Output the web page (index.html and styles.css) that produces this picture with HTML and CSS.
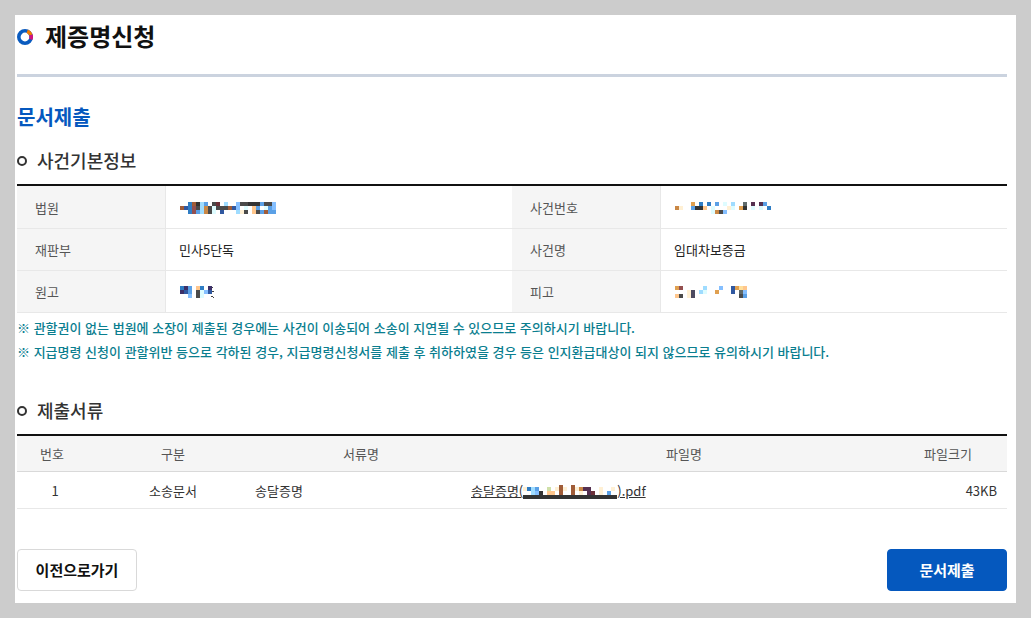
FILE: index.html
```html
<!DOCTYPE html>
<html lang="ko">
  <head>
    <meta charset="utf-8" />
    <title>제증명신청</title>
    <link rel="stylesheet" href="styles.css">
  </head>
  <body>
    <div class="container">
      <h1 class="page_title">
        <svg class="logo" width="16" height="16" viewBox="0 0 16 16">
          <circle cx="8" cy="8" r="6.2" fill="none" stroke="#0a5bbf" stroke-width="3.6" />
          <path d="M10.2 2.2A6.2 6.2 0 0 1 13.9 6" fill="none" stroke="#f57c00" stroke-width="3.6" />
          <path d="M13.9 6A6.2 6.2 0 0 1 13.7 10.4" fill="none" stroke="#d1127f" stroke-width="3.6" />
        </svg>
        제증명신청
      </h1>

      <h2>문서제출</h2>

      <h3>사건기본정보</h3>
      <table class="info">
        <tr>
          <th scope="row">법원</th>
          <td><svg class="mosaic" width="96" height="12" data-rows="..bwksB.dm.s..hddkkkBddh wvbrdsodldddwvh.l.pB.lBh ..brBsodl.v...scd.pdBwBB"></svg></td>
          <th scope="row">사건번호</th>
          <td><svg class="mosaic" width="96" height="12" data-rows="....y.b.b.B.l.s..g.M.MB. oc..Bkkp.l...cl.yk.l.l.b .........lodh"></svg></td>
        </tr>
        <tr>
          <th scope="row">재판부</th>
          <td>민사5단독</td>
          <th scope="row">사건명</th>
          <td>임대차보증금</td>
        </tr>
        <tr>
          <th scope="row">원고</th>
          <td><svg class="mosaic" width="36" height="12" data-rows="bnB.pb.n nvB.dlhv ..h.dl">
            <path d="M31 1h2M32 5h2M31 10h2M33 11h1" stroke="#444" />
          </svg></td>
          <th scope="row">피고</th>
          <td><svg class="mosaic" width="96" height="12" data-rows="yr.....s...h..vyap ...cD.sl..y...v.gh pd.cD...........dB"></svg></td>
        </tr>
      </table>

      <p class="notice">※ 관할권이 없는 법원에 소장이 제출된 경우에는 사건이 이송되어 소송이 지연될 수 있으므로 주의하시기 바랍니다.</p>
      <p class="notice">※ 지급명령 신청이 관할위반 등으로 각하된 경우, 지급명령신청서를 제출 후 취하하였을 경우 등은 인지환급대상이 되지 않으므로 유의하시기 바랍니다.</p>

      <h3 class="doc_title">제출서류</h3>
      <table class="docs">
        <colgroup>
          <col class="c_no" />
          <col class="c_type" />
          <col class="c_doc" />
          <col class="c_file" />
          <col class="c_size" />
        </colgroup>
        <thead>
          <tr>
            <th class="no">번호</th>
            <th>구분</th>
            <th>서류명</th>
            <th>파일명</th>
            <th class="size">파일크기</th>
          </tr>
        </thead>
        <tbody>
          <tr>
            <td>1</td>
            <td>소송문서</td>
            <td class="left">송달증명</td>
            <td class="left"><a href="#">송달증명(<svg class="mosaic file" width="94" height="14" viewBox="0 2 94 14" data-rows=".........w..w cbsB..G.cwc.wcoMM..c..c ..shk.pp.w..w.c.Mm.c.B kkkkkkkkkkkkkkkkkkkkkkkk"></svg>).pdf</a></td>
            <td class="size">43KB</td>
          </tr>
        </tbody>
      </table>

      <div class="buttons">
        <button type="button">이전으로가기</button>
        <button type="button" class="submit">문서제출</button>
      </div>
    </div>

    <script src="mosaic.js"></script>
  </body>
</html>
```

FILE: styles.css
```css
*,
*::before {
  margin: 0;
  padding: 0;
  box-sizing: border-box;
}
body {
  background: #ccc;
  padding: 15px;
  font-family: "Noto Sans CJK KR", "Noto Sans", sans-serif;
  font-size: 13px;
  line-height: 20px;
  color: #333;
}
.container {
  background: #fff;
  padding: 4px 9px 12px 2px;
}

.page_title {
  display: flex;
  align-items: center;
  gap: 12px;
  padding-bottom: 21px;
  border-bottom: 3px solid #cbd3df;
  font-size: 24px;
  line-height: 34px;
  font-weight: 700;
  color: #111;
}
.logo {
  margin-top: 2px;
}
h2 {
  margin-top: 26px;
  font-size: 20px;
  line-height: 28px;
  font-weight: 700;
  color: #0558be;
}
h3 {
  display: flex;
  align-items: center;
  gap: 10px;
  margin: 17px 0 12px;
  font-size: 18px;
  line-height: 24px;
  font-weight: 500;
  color: #333;
}
h3::before {
  content: "";
  width: 10px;
  height: 10px;
  margin-top: 2px;
  border: 2px solid #333;
  border-radius: 50%;
}
.doc_title {
  margin-top: 34px;
}

table {
  width: 100%;
  table-layout: fixed;
  border-spacing: 0;
  border-top: 2px solid #111;
}
th {
  background: #f5f5f5;
  font-weight: 400;
  color: #555;
}
.info {
  margin-bottom: 3px;
}
.info th,
.info td {
  height: 42px;
  border-bottom: 1px solid #e8e8e8;
  text-align: left;
}
.info tr:first-child th,
.info tr:first-child td {
  height: 43px;
  padding-top: 2px;
}
.info th {
  width: 149px;
  padding-left: 18px;
  border-right: 1px solid #e8e8e8;
}
.info td {
  padding-left: 13px;
  color: #222;
}
.mosaic {
  display: block;
  margin-left: 1px;
  shape-rendering: crispEdges;
}
.mosaic.file {
  display: inline-block;
  margin-left: 0;
  vertical-align: -3px;
}

.notice {
  line-height: 24px;
  font-weight: 500;
  color: #0a7e8f;
}

.c_no {
  width: 76px;
}
.c_type {
  width: 160px;
}
.c_doc {
  width: 216px;
}
.c_size {
  width: 108px;
}
.docs th {
  height: 36px;
  border-bottom: 1px solid #d9d9d9;
}
.docs td {
  height: 37px;
  padding-top: 2px;
  border-bottom: 1px solid #e8e8e8;
  text-align: center;
}
.docs .no {
  padding-right: 6px;
}
.docs .left {
  padding-left: 2px;
  text-align: left;
}
.docs .size {
  padding-right: 10px;
}
.docs td.size {
  text-align: right;
}
.docs a {
  color: #333;
  text-decoration: underline;
}

.buttons {
  display: flex;
  justify-content: space-between;
  margin-top: 40px;
}
button {
  width: 120px;
  height: 42px;
  padding-bottom: 2px;
  border: 1px solid #d9d9d9;
  border-radius: 4px;
  background: #fff;
  font-family: inherit;
  font-size: 15px;
  font-weight: 700;
  color: #111;
  cursor: pointer;
}
.submit {
  border-color: #0558be;
  background: #0558be;
  color: #fff;
}
```

FILE: mosaic.js
```javascript
// masks private values with 4px blocks, one letter per block
var colors = {
  d: "#4a4a4a", k: "#333333", b: "#2f7dc4", n: "#3c3068", B: "#5aa0e6",
  s: "#9fdcff", l: "#defcff", o: "#c98745", p: "#ffc68c", c: "#fff0d4",
  m: "#6b3038", r: "#934f4f", w: "#a05c38", v: "#3058a0", y: "#e0a050",
  h: "#85bfff", g: "#5f6a6a", M: "#553050", a: "#ffdf9a", D: "#4d4a60",
  G: "#cfe0a8",
};

document.querySelectorAll(".mosaic").forEach(function (svg) {
  svg.dataset.rows.split(" ").forEach(function (row, y) {
    for (var x = 0; x < row.length; x++) {
      if (!colors[row[x]]) continue;
      var rect = document.createElementNS("http://www.w3.org/2000/svg", "rect");
      rect.setAttribute("x", x * 4);
      rect.setAttribute("y", y * 4);
      rect.setAttribute("width", 4);
      rect.setAttribute("height", 4);
      rect.setAttribute("fill", colors[row[x]]);
      svg.appendChild(rect);
    }
  });
});
```
